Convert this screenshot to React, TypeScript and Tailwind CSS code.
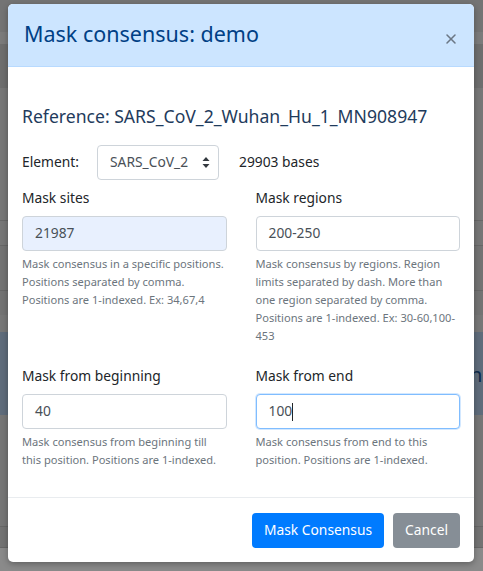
import { X } from "lucide-react";

const stripes: [number, string][] = [
  [32, "#747474"],
  [12, "#7b7b7b"],
  [44, "#6e6e6e"],
  [132, "#777777"],
  [1, "#676767"],
  [24, "#767676"],
  [1, "#676767"],
  [44, "#737373"],
  [1, "#676767"],
  [24, "#737373"],
  [17, "#777777"],
];

function Field({ label, value, help, autofill, focus }: { label: string; value: string; help: string; autofill?: boolean; focus?: boolean }) {
  return (
    <div className="flex flex-col">
      <label className="text-[13.8px] leading-[22px] text-[#212529] mb-[7px]">{label}</label>
      <div
        className={
          "h-[35px] rounded-[4px] border px-[12px] flex items-center text-[13.8px] text-[#495057] " +
          (autofill ? "bg-[#e8f0fe] border-[#ced4da]" : "bg-white ") +
          (focus ? "border-[#80bdff] shadow-[0_0_0_1px_rgba(128,189,255,0.35)]" : autofill ? "" : "border-[#ced4da]")
        }
      >
        {value}
        {focus && <span className="inline-block w-[1px] h-[18px] bg-[#212529]" />}
      </div>
      <p className="mt-[4px] text-[11.1px] leading-[18px] text-[#6c757d]">{help}</p>
    </div>
  );
}

export default function App() {
  return (
    <div className="relative w-[483px] h-[571px] overflow-hidden" style={{ fontFamily: '"Noto Sans", "Open Sans", sans-serif' }}>
      {/* backdrop */}
      <div className="flex flex-col">
        {stripes.map(([h, c], i) => (
          <div key={i} style={{ height: h, background: c }} />
        ))}
        <div className="h-[83px] bg-[#5f6c7b] pl-[470px] pt-[30px] text-[20px] leading-[26px] text-[#0d2a4a] overflow-hidden whitespace-nowrap">n</div>
        <div className="h-[111px] bg-[#767676]" />
        <div className="h-[1px] bg-[#676767]" />
        <div className="h-[20px] bg-[#737373]" />
        <div className="h-[1px] bg-[#676767]" />
        <div className="h-[24px] bg-[#8a8a8a]" />
      </div>

      {/* modal */}
      <div className="absolute left-[8px] top-[4px] w-[466px] h-[558px] bg-white rounded-[5px] shadow-[0_2px_6px_rgba(0,0,0,0.3)] flex flex-col overflow-hidden">
        <div className="h-[63px] bg-[#cce5ff] flex items-center justify-between pl-[16px] pr-[15px] border-b border-[#b8daff]">
          <h2 className="text-[21.5px] leading-[30px] text-[#004085] mt-[-2px]">Mask consensus: demo</h2>
          <X size={16} strokeWidth={2.3} className="text-[#6b7785] mt-[8px]" />
        </div>

        <div className="px-[14px] pt-[38px] flex-1">
          <h3 className="text-[17.6px] leading-[22px] text-[#1f3b5c]">Reference: SARS_CoV_2_Wuhan_Hu_1_MN908947</h3>

          <div className="flex items-center mt-[18px] text-[13.8px] text-[#212529]">
            <span className="w-[75px]">Element:</span>
            <div className="w-[122px] h-[35px] rounded-[4px] border border-[#ced4da] flex items-center justify-between pl-[12px] pr-[8px] text-[#495057]">
              <span>SARS_CoV_2</span>
              <svg width="8" height="11" viewBox="0 0 8 11" className="fill-[#343a40]">
                <path d="M4 0 L7.5 4 H0.5 Z M4 11 L7.5 7 H0.5 Z" />
              </svg>
            </div>
            <span className="ml-[20px]">29903 bases</span>
          </div>

          <div className="grid grid-cols-2 gap-x-[29px] mt-[7px]">
            <Field
              label="Mask sites"
              value="21987"
              autofill
              help="Mask consensus in a specific positions. Positions separated by comma. Positions are 1-indexed. Ex: 34,67,4"
            />
            <Field
              label="Mask regions"
              value="200-250"
              help="Mask consensus by regions. Region limits separated by dash. More than one region separated by comma. Positions are 1-indexed. Ex: 30-60,100-453"
            />
          </div>

          <div className="grid grid-cols-2 gap-x-[29px] mt-[20px]">
            <Field
              label="Mask from beginning"
              value="40"
              help="Mask consensus from beginning till this position. Positions are 1-indexed."
            />
            <Field
              label="Mask from end"
              value="100"
              focus
              help="Mask consensus from end to this position. Positions are 1-indexed."
            />
          </div>
        </div>

        <div className="border-t border-[#e9ecef] h-[65px] flex items-center justify-end gap-[9px] px-[14px]">
          <button className="h-[35px] px-[12px] rounded-[4px] bg-[#007bff] text-white text-[13.8px]">Mask Consensus</button>
          <button className="h-[35px] px-[12px] rounded-[4px] bg-[#868e96] text-white text-[13.8px]">Cancel</button>
        </div>
      </div>
    </div>
  );
}
